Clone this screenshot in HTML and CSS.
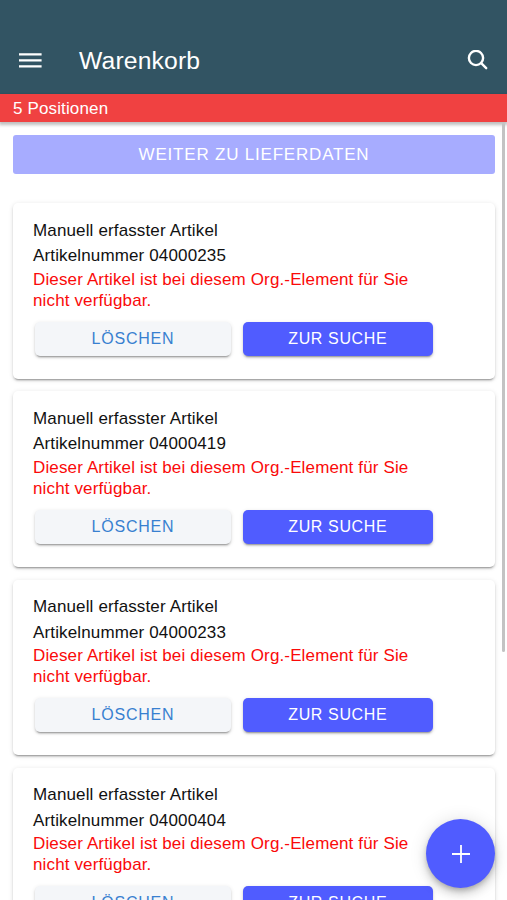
FILE: index.html
```
<!DOCTYPE html>
<html lang="de">
<head>
<meta charset="utf-8">
<title>Warenkorb</title>
<link rel="stylesheet" href="styles.css">
</head>
<body>
<header class="toolbar">
  <svg class="menu" viewBox="0 0 24 18" aria-hidden="true"><path d="M1 2.3h22.6M1 8.3h22.6M1 14.3h22.6"/></svg>
  <h1>Warenkorb</h1>
  <svg class="search" viewBox="0 0 22 22" aria-hidden="true"><circle cx="9" cy="8" r="7.1"/><path d="M14.2 13.2l5 5"/></svg>
</header>
<div class="positions">5 Positionen</div>
<main>
  <button class="next" disabled>WEITER ZU LIEFERDATEN</button>
  <section class="cards">
    <article class="card">
      <p>Manuell erfasster Artikel</p>
      <p>Artikelnummer 04000235</p>
      <p class="error">Dieser Artikel ist bei diesem Org.-Element für Sie<br>nicht verfügbar.</p>
      <div class="actions"><button class="delete">LÖSCHEN</button><button class="find">ZUR SUCHE</button></div>
    </article>
    <article class="card">
      <p>Manuell erfasster Artikel</p>
      <p>Artikelnummer 04000419</p>
      <p class="error">Dieser Artikel ist bei diesem Org.-Element für Sie<br>nicht verfügbar.</p>
      <div class="actions"><button class="delete">LÖSCHEN</button><button class="find">ZUR SUCHE</button></div>
    </article>
    <article class="card">
      <p>Manuell erfasster Artikel</p>
      <p>Artikelnummer 04000233</p>
      <p class="error">Dieser Artikel ist bei diesem Org.-Element für Sie<br>nicht verfügbar.</p>
      <div class="actions"><button class="delete">LÖSCHEN</button><button class="find">ZUR SUCHE</button></div>
    </article>
    <article class="card">
      <p>Manuell erfasster Artikel</p>
      <p>Artikelnummer 04000404</p>
      <p class="error">Dieser Artikel ist bei diesem Org.-Element für Sie<br>nicht verfügbar.</p>
      <div class="actions"><button class="delete">LÖSCHEN</button><button class="find">ZUR SUCHE</button></div>
    </article>
  </section>
</main>
<div class="scrollbar"></div>
<button class="fab" aria-label="Hinzufügen"><svg viewBox="0 0 20 20" aria-hidden="true"><path d="M10 1v18M1 10h18"/></svg></button>
</body>
</html>
```
FILE: styles.css
```
* { box-sizing: border-box; }
body {
  margin: 0;
  height: 900px;
  overflow: hidden;
  background: #fff;
  color: #111;
  font: 17px/25.5px "Liberation Sans", Arial, sans-serif;
  letter-spacing: .14px;
}
h1, p { margin: 0; }
button {
  padding: 0;
  border: 0;
  font-family: inherit;
}
.toolbar {
  display: flex;
  align-items: center;
  height: 94px;
  padding: 27px 18px 0;
  background: #325463;
  color: #fff;
}
.toolbar svg { fill: none; stroke: #fff; }
.menu { width: 24px; height: 18px; stroke-width: 2.3; }
.toolbar h1 {
  flex: 1;
  margin-left: 37px;
  font-size: 24.7px;
  font-weight: 400;
  letter-spacing: .15px;
}
.search { width: 22px; height: 22px; stroke-width: 2.4; stroke-linecap: round; margin-right: .5px; }
.positions {
  position: relative;
  height: 28px;
  padding-left: 13px;
  line-height: 29px;
  background: #f04141;
  color: #fff;
  box-shadow: 0 2px 3px 1px rgba(0, 0, 0, .25);
}
main { padding: 13px 12px 0 13px; }
.next {
  display: block;
  width: 100%;
  height: 39px;
  border-radius: 3px;
  background: #a7acff;
  color: #fff;
  font-size: 17px;
  letter-spacing: .8px;
}
.cards {
  display: flex;
  flex-direction: column;
  gap: 12.8px;
  margin-top: 29px;
}
.card {
  height: 175.5px;
  padding: 14.5px 20px 0;
  border-radius: 5px;
  background: #fff;
  box-shadow: 0 3px 1px -2px rgba(0, 0, 0, .2), 0 2px 2px 0 rgba(0, 0, 0, .14), 0 1px 5px 0 rgba(0, 0, 0, .12);
}
.error { color: #fa0a0a; line-height: 21px; }
.actions {
  display: flex;
  gap: 12px;
  margin: 11px 0 0 2px;
}
.actions button {
  height: 34px;
  border-radius: 5px;
  font-size: 16px;
  letter-spacing: .78px;
  box-shadow: 0 3px 1px -2px rgba(0, 0, 0, .2), 0 2px 2px 0 rgba(0, 0, 0, .14), 0 1px 4px 0 rgba(0, 0, 0, .12);
}
.actions .delete { width: 196px; background: #f4f6f9; color: #3880d0; }
.actions .find { width: 189.5px; background: #505cff; color: #fff; letter-spacing: .62px; }
.scrollbar {
  position: absolute;
  top: 123px;
  right: 2px;
  width: 3px;
  height: 529px;
  border-radius: 2px;
  background: #c3c3c3;
}
.fab {
  position: absolute;
  right: 12px;
  bottom: 12px;
  display: grid;
  place-items: center;
  width: 69px;
  height: 69px;
  border-radius: 50%;
  background: #505cff;
  box-shadow: 0 3px 5px -1px rgba(0, 0, 0, .2), 0 6px 10px 0 rgba(0, 0, 0, .14), 0 1px 18px 0 rgba(0, 0, 0, .12);
}
.fab svg { width: 20px; height: 20px; fill: none; stroke: #fff; stroke-width: 1.8; }
```
